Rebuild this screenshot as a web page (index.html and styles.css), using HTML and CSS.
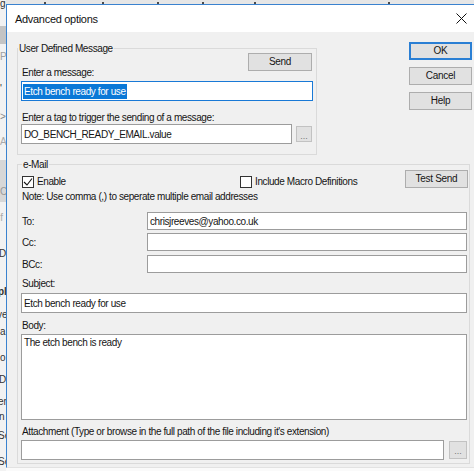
FILE: index.html
```html
<!DOCTYPE html>
<html>
<head>
<meta charset="utf-8">
<link rel="stylesheet" href="styles.css">
</head>
<body>
<div class="screen">
  <div class="behind">
    <div class="bl bl-g">g</div>
    <div class="bblock b1"></div>
    <div class="bl bl-p">P</div>
    <div class="bl bl-q">'</div>
    <div class="bl bl-gt">&gt;</div>
    <div class="bl bl-a">A</div>
    <div class="bblock b2"><span>C</span></div>
    <div class="bl bl-f">if</div>
    <div class="bl bl-d">D</div>
    <div class="bl bl-pl">pl</div>
    <div class="bl bl-ve">ve</div>
    <div class="bl bl-a2">a</div>
    <div class="bl bl-o">o</div>
    <div class="bl bl-d2">D</div>
    <div class="bl bl-er">er</div>
    <div class="bl bl-n">n</div>
    <div class="bl bl-se">Se</div>
    <div class="bl bl-se2">Se</div>
  </div>
  <div class="topstrip">
    <span class="tick t1"></span><span class="tick t2"></span><span class="tick t3"></span><span class="tick t4"></span><span class="tick t5"></span><span class="tick t6"></span>
  </div>
  <div class="dialog">
    <div class="titlebar">
      <span class="title">Advanced options</span>
      <svg class="close" width="11" height="11" viewBox="0 0 11 11"><path d="M0.5 0.5 L10.5 10.5 M10.5 0.5 L0.5 10.5" stroke="#111" stroke-width="1" fill="none"/></svg>
    </div>
    <div class="dbody">
      <div class="upper">
        <fieldset class="grp grp1">
          <legend class="lg1">User Defined Message</legend>
          <div class="sendrow"><button class="btn send">Send</button></div>
          <div class="lbl lbl-msg">Enter a message:</div>
          <div class="input focus"><span class="sel">Etch bench ready for use</span></div>
          <div class="lbl lbl-tag">Enter a tag to trigger the sending of a message:</div>
          <div class="inrow">
            <div class="input tag">DO_BENCH_READY_EMAIL.value</div>
            <button class="btn dots">...</button>
          </div>
        </fieldset>
        <div class="sidebtns">
          <button class="btn ok">OK</button>
          <button class="btn">Cancel</button>
          <button class="btn">Help</button>
        </div>
      </div>
      <fieldset class="grp grp2">
        <legend class="lg2">e-Mail</legend>
        <div class="row1">
          <div class="chk chk-enable">
            <span class="box"><svg width="10" height="10" viewBox="0 0 10 10"><path d="M1 5 L4 8 L9 1.5" stroke="#111" stroke-width="1.1" fill="none"/></svg></span>
            <span class="chktxt">Enable</span>
          </div>
          <div class="chk">
            <span class="box"></span>
            <span class="chktxt">Include Macro Definitions</span>
          </div>
          <button class="btn testsend">Test Send</button>
        </div>
        <div class="note">Note: Use comma (,) to seperate multiple email addresses</div>
        <div class="arow r-to"><span class="alabel">To:</span><div class="input addr">chrisjreeves@yahoo.co.uk</div></div>
        <div class="arow r-cc"><span class="alabel">Cc:</span><div class="input addr"></div></div>
        <div class="arow r-bcc"><span class="alabel">BCc:</span><div class="input addr"></div></div>
        <div class="lbl lbl-subj">Subject:</div>
        <div class="input subj">Etch bench ready for use</div>
        <div class="lbl lbl-body">Body:</div>
        <div class="input area">The etch bench is ready</div>
        <div class="lbl lbl-att">Attachment (Type or browse in the full path of the file including it's extension)</div>
        <div class="inrow attrow">
          <div class="input att"></div>
          <button class="btn dots dots2">...</button>
        </div>
      </fieldset>
    </div>
  </div>
</div>
</body>
</html>
```
FILE: styles.css
```css
* { box-sizing: border-box; }
html, body { margin: 0; padding: 0; }
body {
  width: 474px;
  height: 471px;
  overflow: hidden;
  background: #fafafa;
  font-family: "Liberation Sans", Arial, sans-serif;
  font-size: 10px;
  letter-spacing: -0.4px;
  color: #151515;
}
.screen {
  display: grid;
  grid-template-columns: 6px 1fr;
  grid-template-rows: 4px auto 1fr;
  height: 471px;
}
.behind {
  grid-row: 1 / 4;
  grid-column: 1;
  background: #f2f2f2;
  overflow: hidden;
  display: flex;
  flex-direction: column;
  letter-spacing: 0;
}
.bl {
  height: 10px;
  line-height: 10px;
  font-size: 10px;
  white-space: nowrap;
  color: #333;
}
.bl-g { margin-top: -1px; }
.bblock { width: 6px; background: #c4c4c4; }
.b1 { height: 18px; margin-top: 17px; }
.bl-p { margin-top: 8px; color: #a0a0a0; }
.bl-q { margin-top: 22px; }
.bl-gt { margin-top: 18px; color: #888; }
.bl-a { margin-top: 15px; color: #aaa; }
.b2 { height: 42px; margin-top: 13px; background: #d7d7d7; display: flex; align-items: flex-end; font-size: 10px; color: #999; padding-bottom: 5px; }
.bl-f { margin-top: 11px; color: #aaa; text-indent: -2px; }
.bl-d { margin-top: 26px; text-indent: -1px; }
.bl-pl { margin-top: 28px; font-weight: bold; text-indent: -2px; }
.bl-ve { margin-top: 13px; text-indent: -3px; }
.bl-a2 { margin-top: 7px; }
.bl-o { margin-top: 16px; }
.bl-d2 { margin-top: 12px; text-indent: -1px; }
.bl-er { margin-top: 12px; text-indent: -2px; }
.bl-n { margin-top: 5px; text-indent: -1px; }
.bl-se { margin-top: 9px; text-indent: -2px; }
.bl-se2 { margin-top: 16px; text-indent: -2px; }

.topstrip {
  grid-row: 1;
  grid-column: 2;
  background: #e6e6e6;
  display: flex;
  align-items: flex-end;
}
.tick { width: 2px; height: 2px; background: #4a4a4a; }
.t1 { margin-left: 38px; }
.t2 { margin-left: 56px; }
.t3 { margin-left: 53px; }
.t4 { margin-left: 43px; }
.t5 { margin-left: 50px; }
.t6 { margin-left: 132px; }
.dialog {
  grid-row: 2;
  grid-column: 2;
  border-left: 1px solid #3a82cf;
  border-top: 1px solid #3a82cf;
  border-bottom: 1px solid #e2e2e2;
  background: #f0f0f0;
}
.titlebar {
  height: 27px;
  background: #ffffff;
  display: flex;
  align-items: center;
  padding-left: 8px;
}
.title { font-size: 11px; letter-spacing: -0.3px; color: #111; }
.close { margin-left: auto; margin-right: 7px; }

.dbody { padding: 0 0 3px 10px; }
.upper { display: flex; align-items: flex-start; }

fieldset.grp {
  margin: 0;
  border: 1px solid #dadada;
  min-width: 0;
}
legend {
  padding: 2px 1px 0 1px;
  line-height: 12px;
  font-size: 10px;
  color: #151515;
}
fieldset.grp1 {
  width: 300px;
  margin-top: 9px;
  padding: 0 3px 10px 3px;
}
.lg1 { margin-left: -3px; }
.sendrow { display: flex; justify-content: flex-end; margin-top: -2px; padding-right: 1px; }
.btn {
  font-family: inherit;
  font-size: 10px;
  letter-spacing: -0.3px;
  color: #151515;
  background: #e1e1e1;
  border: 1px solid #adadad;
  padding: 0;
  margin: 0;
  height: 18px;
  width: 63px;
  line-height: 16px;
}
.send { width: 64px; }
.lbl { line-height: 12px; height: 12px; padding-left: 1px; white-space: nowrap; }
.lbl-msg { margin-top: -4px; }
.input {
  background: #ffffff;
  border: 1px solid #9c9c9c;
  display: flex;
  align-items: center;
  padding-left: 2px;
  white-space: nowrap;
  overflow: hidden;
}
.focus {
  height: 20px;
  margin-top: 2px;
  border-color: #1979d6;
  padding-left: 1px;
}
.sel {
  background: #0a78d7;
  color: #ffffff;
  padding: 0 1px;
  line-height: 15px;
}
.lbl-tag { margin-top: 11px; }
.inrow { display: flex; align-items: flex-start; }
.tag { width: 271px; height: 20px; }
.dots {
  width: 16px;
  height: 16px;
  margin-left: 4px;
  margin-top: 2px;
  color: #777;
  font-size: 9px;
  letter-spacing: 0;
  line-height: 18px;
  border-color: #c2c2c2;
}
.sidebtns {
  margin-left: auto;
  margin-right: 2px;
  margin-top: 10px;
  display: flex;
  flex-direction: column;
  gap: 7px;
}
.ok { border: 2px solid #2a7fd4; line-height: 14px; }

fieldset.grp2 {
  width: 453px;
  margin-top: 2px;
  padding: 0 2px 3px 3px;
}
.lg2 { margin-left: 1px; }
.row1 { display: flex; align-items: flex-start; height: 18px; margin-top: -1px; }
.chk { display: flex; align-items: center; margin-top: 6px; height: 12px; }
.chk-enable { width: 218px; margin-left: 1px; }
.box {
  width: 12px;
  height: 12px;
  border: 1px solid #333;
  background: #ffffff;
  display: flex;
  align-items: center;
  justify-content: center;
}
.chktxt { margin-left: 3px; line-height: 12px; }
.testsend { margin-left: auto; margin-right: -1px; }
.note { margin-top: 3px; line-height: 12px; height: 12px; padding-left: 1px; white-space: nowrap; }
.arow { display: flex; align-items: center; height: 18px; }
.alabel { width: 126px; padding-left: 1px; }
.addr { flex: 1; height: 18px; }
.r-to { margin-top: 9px; }
.r-cc { margin-top: 3px; }
.r-bcc { margin-top: 4px; }
.lbl-subj { margin-top: 5px; }
.subj { height: 20px; margin-top: 3px; }
.lbl-body { margin-top: 7px; }
.area { height: 86px; margin-top: 2px; align-items: flex-start; padding-top: 2px; }
.lbl-att { margin-top: 6px; }
.attrow { margin-top: 2px; }
.att { width: 424px; height: 20px; }
.dots2 { width: 18px; height: 18px; margin-left: 5px; margin-top: 1px; }
```
